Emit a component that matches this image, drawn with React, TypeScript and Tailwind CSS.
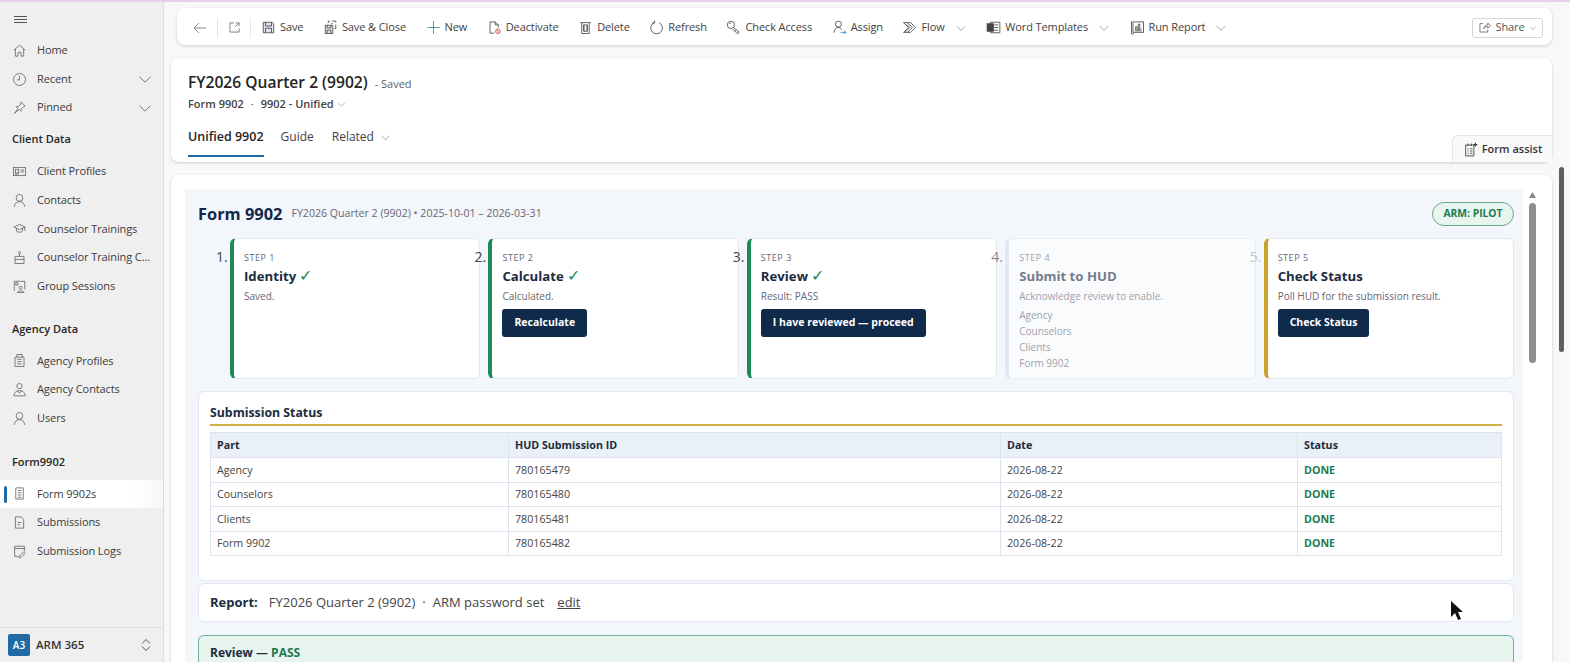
import type { ReactNode } from 'react';

const shell = "font-['Open_Sans','Noto_Sans',sans-serif]";

// --- icons, all 20x20 thin line drawings
function Ico({ children, size = 16, className = '' }: { children: ReactNode; size?: number; className?: string }) {
  return (
    <svg width={size} height={size} viewBox="0 0 20 20" fill="none" stroke="currentColor" strokeWidth="1.1" className={`shrink-0 ${className}`}>
      {children}
    </svg>
  );
}

const Chevron = ({ size = 16, className = '' }: { size?: number; className?: string }) => (
  <Ico size={size} className={className}><path d="M3 7l7 7 7-7" /></Ico>
);

const icons: Record<string, ReactNode> = {
  home: <path d="M2.500 9.500L10 3l7.500 6.500M4.500 8v9.500h3.500v-5h4v5h3.500V8" />,
  clock: <><circle cx="10" cy="10" r="8" /><path d="M10 5v5.500H6.500" /></>,
  pin: <path d="M12 2.500l5.500 5.500-2 .8-3 3-.5 3.200-2.500-2.500L3 18l5-6.500L5.500 9l3.200-.5 3-3z" />,
  card: <><rect x="2" y="4.500" width="16" height="11" /><rect x="4.500" y="7" width="4.500" height="5" /><path d="M11.500 8h4.500M11.500 10.500h4.500M4 13.500h5" /></>,
  person: <><circle cx="10" cy="6.500" r="4.500" /><path d="M3 18.500c.5-4.500 3-7 7-7s6.500 2.500 7 7" /></>,
  cap: <><path d="M2.500 8L10 4.500 17.500 8 10 11.500z" /><path d="M6 10v3.500c2 2 6 2 8 0V10M17 8v5" /></>,
  chalk: <><circle cx="10" cy="3.500" r="1.500" /><path d="M10 5v3.500M4 8.500h12V18H4zM4 12.500h12" /></>,
  group: <><path d="M3 16V3h14v11" /><path d="M5 5h3v3H5z" /><circle cx="11.500" cy="11.500" r="2" /><path d="M7 18c.5-3 8.500-3 9 0z" /></>,
  building: <><path d="M4 5.500h12V18H4zM6.500 5.500V2h7v3.500M7 8.500h6M7 11.500h6M7 14.500h6" /></>,
  contacts: <><circle cx="10" cy="5.500" r="3.500" /><path d="M2.500 18.500c0-4 2.500-7 7.500-7s7.500 3 7.500 7zM7 11.500l3 3.500 3-3.500" /></>,
  doc: <><path d="M5 2.500h10v15H5z" /><path d="M7.500 6h5M7.500 9h5M7.500 12h5M7.500 15h5" /></>,
  sub: <><path d="M4.500 2.500h7.500l3.500 3.500v11.500h-11z" /><path d="M7.500 10h5M7.500 13h3" /></>,
  log: <><path d="M3.500 3h13v7M3.500 3v13.500h5M3.500 6h13" /><path d="M15.500 10.500l2 2-5.500 5.500-2.500.5.500-2.500z" /></>,
  save: <><path d="M3 3h12l2 2v12H3z" fill="#dfe4ea" /><path d="M6 3v5h8V3M6 17v-6h8v6" /></>,
  saveClose: <><path d="M3 7h10v11H3z" fill="#dfe4ea" /><path d="M5.500 7v3.500h5V7M5.500 18v-4.500h5V18" /><path d="M7 4V1.500h2M12 1.500h5v2M17 6v5.500h-2" /><path d="M11 4.500l2 0" /></>,
  plus: <path d="M10 1.500v17M1.500 10h17" />,
  deactivate: <><path d="M4 2.500h7l4 4v3.500M4 2.500v15h5.500M11 2.500v4h4" /><circle cx="14.500" cy="15" r="3" stroke="#c0392b" /><path d="M12.500 13l4 4" stroke="#c0392b" /></>,
  trash: <><path d="M3 3.500h14M5 3.500V18h10V3.500M8 6.500v8.500M12 6.500v8.500M7.500 6.500h5v8.500h-5z" /></>,
  refresh: <><path d="M7 3.500A7.800 7.800 0 1 0 13.500 3.600" /><path d="M7.500.8V4H4.200" /></>,
  access: <><circle cx="6.500" cy="6.500" r="4.800" /><path d="M4.500 5.500c.5-1 1-1.500 2-1.500" /><path d="M10 10l7.500 6-2 2.500L9 12M13 13l-1.800 2" /></>,
  assign: <><circle cx="8.500" cy="5.500" r="4" /><path d="M2.500 17c.5-4 2.500-7 6-7 2 0 3.500 1 4.500 3" /><path d="M11.500 16.500h7M16 14l2.500 2.500L16 19" stroke="#2b7cd3" /></>,
  flow: <path d="M2 3.500h9.500l6.500 6.500-6.500 6.500H4l6.500-6.500-4-4M2 3.500l6.500 6.500L2 16.500h2M7 3.500L14 10l-6.500 6.500" />,
  word: <><path d="M6 3h12.500v14H6z" /><path d="M11 6.500h5.500M11 10h5.500M11 13.500h5.500" /><rect x="1.500" y="5" width="8.500" height="10" fill="currentColor" /></>,
  report: <><path d="M4 2.500h14v14H4zM2 1.500v17h3" /><path d="M7.500 13V9h2v4zM11 13V5.500h2V13zM14.500 13v-2" /><path d="M6.500 14.500h9" /></>,
  share: <><path d="M8 4H3v13h12v-4" /><path d="M9 12c0-4 3-6 6-6V3l4 4.500L15 11V8.500c-3 0-5 1-6 3.500z" /></>,
  assist: <><path d="M3.500 4h11v14.500h-11z" /><path d="M6.500 2v3.500M11 2v3.500M6 9h1.500M9.500 9h3M6 12h1.500M9.500 12h3M6 15h1.500M9.500 15h3" /><path d="M16.500 1v5M14 3.500h5" strokeWidth="1.500" /></>,
  popout: <><path d="M9 3H3v14h14v-6" /><path d="M12 3h5v5M17 3l-6 6" /></>,
};

const Icon = ({ name, size = 16, className = '' }: { name: string; size?: number; className?: string }) => (
  <Ico size={size} className={className}>{icons[name]}</Ico>
);

function NavItem({ icon, label, caret, active }: { icon: string; label: string; caret?: boolean; active?: boolean }) {
  return (
    <div className={`relative flex items-center h-[28.7px] pl-[12px] pr-[10px] text-[11px] tracking-[-0.1px] text-[#3b3b3b] ${active ? 'bg-gradient-to-r from-white from-80% to-[#f7f7f7]' : ''}`}>
      {active && <span className="absolute left-[4px] top-[6px] bottom-[5px] w-[3px] rounded-sm bg-[#1f6aa5]" />}
      <Icon name={icon} size={15} className="text-[#666]" />
      <span className="ml-[10px] flex-1 truncate">{label}</span>
      {caret && <Chevron size={16} className="text-[#666]" />}
    </div>
  );
}

const NavHead = ({ label, className = '' }: { label: string; className?: string }) => (
  <div className={`pl-[12px] text-[11px] leading-[16px] font-semibold text-[#262626] ${className}`}>{label}</div>
);

function Sidebar() {
  return (
    <aside className="w-[164px] shrink-0 flex flex-col bg-[#efefef] border-r border-[#dcdcdc]">
      <div className="h-[34px] pl-[14px] pt-[14px]">
        <div className="w-[13px] flex flex-col gap-[2px]">
          <span className="h-px bg-[#555]" /><span className="h-px bg-[#555]" /><span className="h-px bg-[#555]" />
        </div>
      </div>
      <NavItem icon="home" label="Home" />
      <NavItem icon="clock" label="Recent" caret />
      <NavItem icon="pin" label="Pinned" caret />
      <NavHead label="Client Data" className="mt-[9px] mb-[10px]" />
      <NavItem icon="card" label="Client Profiles" />
      <NavItem icon="person" label="Contacts" />
      <NavItem icon="cap" label="Counselor Trainings" />
      <NavItem icon="chalk" label="Counselor Training C..." />
      <NavItem icon="group" label="Group Sessions" />
      <NavHead label="Agency Data" className="mt-[20px] mb-[10px]" />
      <NavItem icon="building" label="Agency Profiles" />
      <NavItem icon="contacts" label="Agency Contacts" />
      <NavItem icon="person" label="Users" />
      <NavHead label="Form9902" className="mt-[21px] mb-[10px]" />
      <NavItem icon="doc" label="Form 9902s" active />
      <NavItem icon="sub" label="Submissions" />
      <NavItem icon="log" label="Submission Logs" />
      <div className="mt-auto h-[35px] flex items-center pl-[8px] pr-[11px] border-t border-[#dedede]">
        <span className="w-[22px] h-[22px] rounded-[2px] bg-[#1f6aa5] text-white text-[10px] font-semibold flex items-center justify-center">A3</span>
        <span className="ml-[6px] flex-1 text-[11.5px] font-semibold text-[#333]">ARM 365</span>
        <svg width="12" height="14" viewBox="0 0 12 14" fill="none" stroke="#555" strokeWidth="1"><path d="M2 5.500L6 1.500l4 4M2 8.500l4 4 4-4" /></svg>
      </div>
    </aside>
  );
}

function Cmd({ icon, label, caret, color }: { icon: string; label: string; caret?: boolean; color?: string }) {
  return (
    <div className="flex items-center text-[11px] tracking-[-0.1px] text-[#424242]">
      <Icon name={icon} size={15} className={color ?? 'text-[#444]'} />
      <span className="ml-[4px]">{label}</span>
      {caret && <Chevron size={12} className="ml-[10px] text-[#777]" />}
    </div>
  );
}

function CommandBar() {
  return (
    <div className="h-[37px] mt-[6px] ml-[6px] flex items-center bg-white rounded-lg shadow-[0_1px_3px_rgba(0,0,0,0.18)] pl-[16px] pr-[9px] pt-[2px]">
      <svg width="14" height="14" viewBox="0 0 14 14" fill="none" stroke="#888" strokeWidth="1"><path d="M13 7H1M6 2L1 7l5 5" /></svg>
      <span className="w-px h-[20px] bg-[#e6e6e6] mx-[10px]" />
      <Icon name="popout" size={13} className="text-[#555]" />
      <span className="w-px h-[20px] bg-[#e6e6e6] ml-[9px] mr-[10px]" />
      <div className="flex items-center gap-[19.5px]">
        <Cmd icon="save" label="Save" />
        <Cmd icon="saveClose" label="Save & Close" />
        <Cmd icon="plus" label="New" color="text-[#2f8f7f]" />
        <Cmd icon="deactivate" label="Deactivate" />
        <Cmd icon="trash" label="Delete" />
        <Cmd icon="refresh" label="Refresh" />
        <Cmd icon="access" label="Check Access" />
        <Cmd icon="assign" label="Assign" />
        <Cmd icon="flow" label="Flow" caret />
        <Cmd icon="word" label="Word Templates" caret />
        <Cmd icon="report" label="Run Report" caret />
      </div>
      <div className="ml-auto h-[20px] w-[71px] flex items-center justify-center border border-[#d6d6d6] rounded-[3px] text-[11px] tracking-[-0.1px] text-[#555]">
        <Icon name="share" size={13} />
        <span className="ml-[4px]">Share</span>
        <Chevron size={8} className="ml-[4px]" />
      </div>
    </div>
  );
}

function RecordHeader() {
  return (
    <div className="relative h-[104px] mt-[13px] bg-white rounded-lg shadow-[0_1px_3px_rgba(0,0,0,0.18)] px-[17px] pt-[13px]">
      <div className="flex items-baseline">
        <span className="text-[15.6px] font-semibold text-[#242424] leading-[22px]">FY2026 Quarter 2 (9902)</span>
        <span className="ml-[7px] text-[11px] text-[#616161]">- Saved</span>
      </div>
      <div className="flex items-center text-[11px] font-semibold text-[#424242] mt-[2px] leading-[18px]">
        <span>Form 9902</span>
        <span className="mx-[7px] font-normal">·</span>
        <span>9902 - Unified</span>
        <Chevron size={9} className="ml-[3px] text-[#666]" />
      </div>
      <div className="flex items-center mt-[15px] text-[12px] text-[#424242]">
        <div className="relative text-[12.5px] font-semibold text-[#242424]">
          Unified 9902
          <span className="absolute left-0 right-0 top-[27px] h-[2px] bg-[#1f6aa5]" />
        </div>
        <span className="ml-[17px]">Guide</span>
        <span className="ml-[18px]">Related</span>
        <Chevron size={11} className="ml-[6px] text-[#666]" />
      </div>
      <div className="absolute right-0 bottom-0 h-[27px] w-[100px] flex items-center justify-center bg-[#fafafa] border-t border-l border-[#e6e6e6] rounded-tl-md text-[11px] font-semibold text-[#333]">
        <Icon name="assist" size={15} />
        <span className="ml-[4px]">Form assist</span>
      </div>
    </div>
  );
}

const steps = [
  { n: 1, title: 'Identity', done: true, note: 'Saved.', bar: 'border-l-[#1e8a5a]', num: 'text-[#444]' },
  { n: 2, title: 'Calculate', done: true, note: 'Calculated.', action: 'Recalculate', bar: 'border-l-[#1e8a5a]', num: 'text-[#444]' },
  { n: 3, title: 'Review', done: true, note: 'Result: PASS', action: 'I have reviewed — proceed', bar: 'border-l-[#1e8a5a]', num: 'text-[#444]' },
  { n: 4, title: 'Submit to HUD', note: 'Acknowledge review to enable.', parts: ['Agency', 'Counselors', 'Clients', 'Form 9902'], bar: 'border-l-[#d5dff0]', dim: true, num: 'text-[#444]' },
  { n: 5, title: 'Check Status', note: 'Poll HUD for the submission result.', action: 'Check Status', bar: 'border-l-[#c9a227]', num: 'text-[#c4c4c4]' },
];

function StepCard({ s }: { s: (typeof steps)[number] }) {
  return (
    <div className={`relative h-[141px] flex-1 min-w-0 bg-white rounded-md border border-[#e3e8f0] border-l-[4px] ${s.bar} pl-[10px] pt-[12px] ${s.dim ? 'opacity-60' : ''}`}>
      <span className={`absolute left-[-18px] top-[7px] text-[14px] ${s.num}`}>{s.n}.</span>
      <div className="text-[9px] tracking-[0.06em] text-[#667] leading-[13px]">STEP {s.n}</div>
      <div className="mt-[2px] h-[20px] text-[13.2px] font-bold text-[#1c2b3f] leading-[20px]">
        {s.title}{s.done && <span className="ml-[3px] text-[16px] leading-none font-normal text-[#1e8a5a]">✓</span>}
      </div>
      <div className="mt-[3px] text-[10px] text-[#667] leading-[14px]">{s.note}</div>
      {s.action && (
        <button className="mt-[6px] h-[28px] px-[12px] rounded-[3px] bg-[#0f2a4a] text-white text-[10.500px] font-bold block">{s.action}</button>
      )}
      {s.parts && (
        <div className="mt-[4px] text-[10px] text-[#667] leading-[16px]">
          {s.parts.map((p) => <div key={p}>{p}</div>)}
        </div>
      )}
    </div>
  );
}

const rows = [
  ['Agency', '780165479'],
  ['Counselors', '780165480'],
  ['Clients', '780165481'],
  ['Form 9902', '780165482'],
];

function StatusTable() {
  const th = 'text-left font-bold text-[#1c2b3f] px-[6px] border border-[#dde3ec] h-[25px]';
  const td = 'px-[6px] text-[#444] border border-[#dde3ec] h-[24.500px]';
  return (
    <div className="mt-[12px] h-[190px] bg-white rounded-md border border-[#e3e8f0] px-[11px] pt-[12px]">
      <div className="text-[12.300px] font-bold text-[#1c2b3f] leading-[17px] pb-[3px] border-b-2 border-[#d4b04a]">Submission Status</div>
      <table className="mt-[6px] w-full table-fixed border-collapse text-[10.700px]">
        <colgroup>
          <col className="w-[298px]" />
          <col className="w-[492px]" />
          <col className="w-[297px]" />
          <col />
        </colgroup>
        <thead>
          <tr className="bg-[#eaf0f8]">
            <th className={th}>Part</th>
            <th className={th}>HUD Submission ID</th>
            <th className={th}>Date</th>
            <th className={th}>Status</th>
          </tr>
        </thead>
        <tbody>
          {rows.map(([part, id]) => (
            <tr key={id}>
              <td className={td}>{part}</td>
              <td className={td}>{id}</td>
              <td className={td}>2026-08-22</td>
              <td className={td}><span className="font-bold text-[#1e7a4f]">DONE</span></td>
            </tr>
          ))}
        </tbody>
      </table>
    </div>
  );
}

function FormPanel() {
  return (
    <div className="relative flex-1 min-h-0 mt-[13px] bg-white rounded-t-lg shadow-[0_1px_3px_rgba(0,0,0,0.18)] pl-[14px] pr-[16px] pt-[14px] flex">
      <div className="flex-1 min-w-0 overflow-hidden bg-[#f3f6fb] pl-[13px] pr-[9px] pt-[14px] font-['Open_Sans',sans-serif]">
        <div className="flex items-center h-[22px]">
          <span className="text-[16.400px] font-bold text-[#10284a]">Form 9902</span>
          <span className="ml-[9px] text-[10.600px] text-[#667]">FY2026 Quarter 2 (9902) • 2025-10-01 – 2026-03-31</span>
          <span className="ml-auto h-[24px] w-[82px] flex items-center justify-center rounded-full border border-[#6aa88a] bg-[#e8f5ee] text-[10.300px] font-bold text-[#1e7a4f]">ARM: PILOT</span>
        </div>
        <div className="mt-[13px] pl-[32px] flex gap-[8px]">
          {steps.map((s) => <StepCard key={s.n} s={s} />)}
        </div>
        <StatusTable />
        <div className="mt-[2px] h-[39px] flex items-center bg-white rounded-md border border-[#e3e8f0] px-[11px] text-[13px] text-[#444]">
          <b className="font-bold text-[#1c2b3f]">Report:</b>
          <span className="ml-[11px]">FY2026 Quarter 2 (9902)</span>
          <span className="mx-[7px]">·</span>
          <span>ARM password set</span>
          <span className="ml-[13px] underline">edit</span>
        </div>
        <div className="mt-[13px] h-[40px] bg-[#e8f5ee] rounded-t-md border border-[#1e8a5a]/60 px-[11px] pt-[9px] text-[12px] leading-[16px] font-bold text-[#1c2b3f]">
          Review — <span className="text-[#1e7a4f]">PASS</span>
        </div>
      </div>
      <div className="w-[7px] shrink-0 ml-[6px]">
        <svg width="7" height="6" viewBox="0 0 7 6" className="mt-[3px]"><path d="M3.500 0l3.500 6H0z" fill="#888" /></svg>
        <div className="mt-[5px] w-[7px] h-[160px] rounded-full bg-[#8f8f8f]" />
      </div>
    </div>
  );
}

export default function App() {
  return (
    <div className={`${shell} w-[1570px] h-[662px] overflow-hidden flex flex-col bg-[#f8f8f8] relative`}>
      <div className="h-[2px] bg-[#e6d2e8] shrink-0" />
      <div className="flex-1 min-h-0 flex">
        <Sidebar />
        <main className="flex-1 min-w-0 flex flex-col pl-[7px] pr-[18px]">
          <CommandBar />
          <RecordHeader />
          <FormPanel />
        </main>
      </div>
      {/* page scrollbar and the mouse pointer lie over the content */}
      <div className="absolute right-[6px] top-[167px] w-[5px] h-[185px] rounded bg-[#5f5f5f]" />
      <svg width="16" height="22" viewBox="0 0 16 22" className="absolute left-[1449px] top-[600px]">
        <path d="M2 1v16l4-4 3 7 3-1-3-7h5z" fill="#111" />
      </svg>
    </div>
  );
}
